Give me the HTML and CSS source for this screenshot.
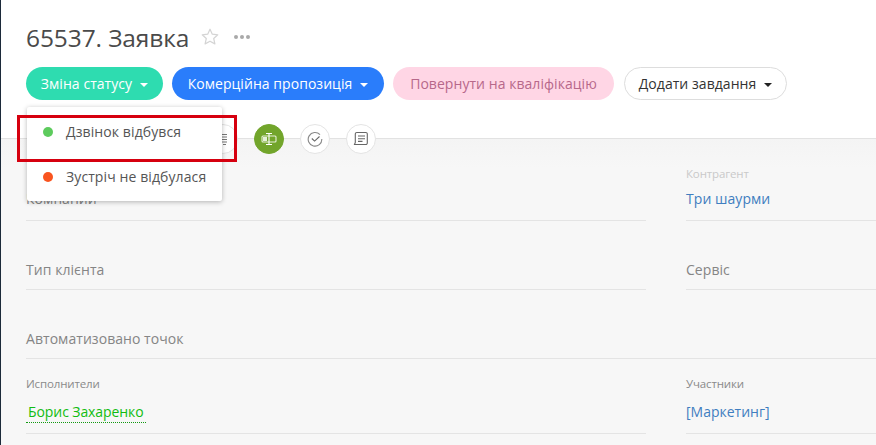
FILE: index.html
```html
<!DOCTYPE html>
<html lang="uk">
<head>
<meta charset="utf-8">
<title>65537. Заявка</title>
<link rel="stylesheet" href="styles.css">
</head>
<body>
<div class="page">
  <header class="head">
    <div class="title-row">
      <h1 class="title">65537. Заявка</h1>
      <svg class="star" width="18" height="18" viewBox="0 0 18 18"><path d="M9 1.200l2.300 5 5.500.6-4.100 3.700 1.200 5.400L9 13.200 4.100 15.900l1.200-5.400L1.200 6.800l5.500-.6z" fill="none" stroke="#d4d4d4" stroke-width="1.200" stroke-linejoin="round"/></svg>
      <span class="dots"><i></i><i></i><i></i></span>
    </div>
    <div class="actions">
      <button class="btn btn-green">Зміна статусу<span class="caret"></span></button>
      <button class="btn btn-blue">Комерційна пропозиція<span class="caret"></span></button>
      <button class="btn btn-pink">Повернути на кваліфікацію</button>
      <button class="btn btn-white">Додати завдання<span class="caret caret-dark"></span></button>
    </div>
  </header>
  <nav class="tabs">
    <span class="tab">
      <svg width="14" height="14" viewBox="0 0 14 14"><path d="M3 2.500h8M3 5h8M3 7.500h8M5 10h6M7 12.500h3" stroke="#777" stroke-width="1"/></svg>
    </span>
    <span class="tab tab-active">
      <svg width="20" height="16" viewBox="0 0 20 16"><rect x="3" y="5" width="14" height="6" rx="1" fill="none" stroke="#e6f0d8" stroke-width="1.100"/><rect x="4" y="6" width="4" height="4" fill="#e6f0d8"/><path d="M10 2.500v11M7 2.500h6M7 13.500h6" stroke="#fff" stroke-width="1.100" fill="none"/></svg>
    </span>
    <span class="tab">
      <svg width="16" height="16" viewBox="0 0 16 16"><path d="M13 3.700A6.800 6.800 0 1 0 14.800 8" fill="none" stroke="#888" stroke-width="1.100"/><path d="M4.800 7.500l2.800 2.600L12.500 5.500" fill="none" stroke="#666" stroke-width="1.100"/></svg>
    </span>
    <span class="tab">
      <svg width="16" height="16" viewBox="0 0 16 16"><path d="M3.800 1.500h9a1.500 1.500 0 0 1 1.500 1.500v9a1.500 1.500 0 0 1-1.500 1.500H1.500l.8-2V3a1.500 1.500 0 0 1 1.500-1.500z" fill="none" stroke="#666" stroke-width="1.100"/><path d="M5 5h7M5 7.700h7M5 10.400h4.500" stroke="#666" stroke-width="1.100"/></svg>
    </span>
  </nav>
  <main class="form">
    <div class="field field-top"><span class="label">Компании</span></div>
    <div class="field field-top"><span class="label-sm label-pale">Контрагент</span><a class="value link">Три шаурми</a></div>
    <div class="field"><span class="label">Тип клієнта</span></div>
    <div class="field"><span class="label">Сервіс</span></div>
    <div class="field field-wide"><span class="label">Автоматизовано точок</span></div>
    <div class="field field-people"><span class="label-sm">Исполнители</span><a class="value person">Борис Захаренко</a></div>
    <div class="field field-people"><span class="label-sm">Участники</span><a class="value link team">[Маркетинг]</a></div>
  </main>
  <div class="menu">
    <div class="menu-item"><span class="dot dot-green"></span>Дзвінок відбувся</div>
    <div class="menu-item"><span class="dot dot-red"></span>Зустріч не відбулася</div>
  </div>
  <div class="highlight"></div>
</div>
</body>
</html>
```
FILE: styles.css
```css
* { box-sizing: border-box; }
html, body { margin: 0; height: 100%; }
body { font-family: "Open Sans", "Noto Sans", sans-serif; background: #f7f7f7; overflow: hidden; }
.page { position: relative; width: 876px; height: 445px; border-left: 1px solid #1c2a3a; overflow: hidden; }

.head { background: #fff; height: 138px; padding: 20px 0 0 25px; }
.title-row { display: flex; align-items: center; height: 34px; }
.title { margin: 0; font-size: 24.500px; font-weight: 400; color: #4a4a4a; letter-spacing: -.1px; }
.star { margin-left: 12px; }
.dots { display: flex; gap: 2px; margin-left: 15px; }
.dots i { width: 4px; height: 4px; border-radius: 50%; background: #a9a9a9; }

.actions { display: flex; gap: 9px; margin-top: 13px; }
.btn { height: 33px; border: 0; border-radius: 17px; font: inherit; font-size: 14px; letter-spacing: .05px; display: flex; align-items: center; justify-content: center; padding: 0; white-space: nowrap; }
.btn-green { width: 137px; background: #2edcb0; color: #fff; }
.btn-blue { width: 212px; background: #2a7dfb; color: #fff; }
.btn-pink { width: 221px; background: #ffd6e5; color: #b7688a; }
.btn-white { width: 163px; margin-left: 1px; background: #fff; color: #333; border: 1px solid #ddd; }
.caret { width: 0; height: 0; margin-left: 8px; margin-top: 2px; border: 4px solid transparent; border-bottom: 0; border-top-color: #fff; }
.caret-dark { border-top-color: #222; }

.tabs { position: absolute; left: 0; top: 124px; width: 100%; padding-left: 207px; display: flex; gap: 16px; }
.tabs::before { content: ""; position: absolute; left: 0; right: 0; top: 14px; height: 1px; background: #e2e2e2; }
.tab { position: relative; width: 30px; height: 30px; border-radius: 50%; background: #fff; border: 1px solid #e4e4e4; display: flex; align-items: center; justify-content: center; }
.tab-active { background: #72a52b; border-color: #72a52b; }

.form { display: grid; grid-template-columns: 620px 1fr; column-gap: 40px; padding: 0 0 0 25px; grid-template-rows: 83px 69px 69px 75px; background: linear-gradient(#f4f4f4, #f7f7f7 30px); }
.field { border-bottom: 1px solid #e4e4e4; display: flex; flex-direction: column; justify-content: flex-end; padding-bottom: 9px; min-width: 0; }
.field-wide { grid-column: 1 / -1; }
.label { font-size: 14px; letter-spacing: .05px; color: #858585; line-height: 20px; }
.label-sm { font-size: 11.500px; letter-spacing: -.15px; color: #8a8a8a; line-height: 16px; }
.label-pale { color: #c9c9c9; margin-bottom: 7px; }
.value { font-size: 14px; letter-spacing: .05px; line-height: 20px; }
.link { color: #3f7ec0; }
.field-top { padding-bottom: 11px; }
.field-people { padding-bottom: 10px; }
.field-people .label-sm { margin-bottom: 10px; }
.person { align-self: flex-start; color: #12bc12; padding: 0 2px; border-bottom: 1px dotted #129a12; letter-spacing: -.08px; }
.team { border-bottom: 1px solid transparent; letter-spacing: 0; }

.menu { position: absolute; left: 26px; top: 107px; width: 195px; height: 94px; background: #fff; border-radius: 2px; box-shadow: 0 1px 5px rgba(0,0,0,.28); padding-top: 2px; }
.menu-item { display: flex; align-items: center; height: 45px; padding-left: 16px; font-size: 14px; letter-spacing: .1px; color: #555; }
.dot { width: 10px; height: 10px; border-radius: 50%; margin-right: 13px; }
.dot-green { background: #5dcb5d; }
.dot-red { background: #f9541f; }
.highlight { position: absolute; left: 16px; top: 115px; width: 220px; height: 47px; border: 3px solid #d6000f; }
```
